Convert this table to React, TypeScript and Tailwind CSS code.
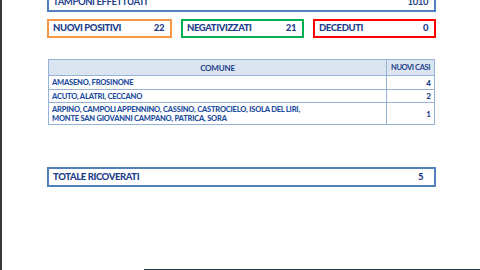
const rows = [
  { comune: ["AMASENO, FROSINONE"], casi: 4, h: "h-[14px]" },
  { comune: ["ACUTO, ALATRI, CECCANO"], casi: 2, h: "h-[13px]" },
  {
    comune: [
      "ARPINO, CAMPOLI APPENNINO, CASSINO, CASTROCIELO, ISOLA DEL LIRI,",
      "MONTE SAN GIOVANNI CAMPANO, PATRICA, SORA",
    ],
    casi: 1,
    h: "h-[22px]",
  },
]

const stats = [
  { label: "NUOVI POSITIVI", value: 22, border: "border-[#f79646]", w: "w-[125px]" },
  { label: "NEGATIVIZZATI", value: 21, border: "border-[#00b050]", w: "w-[123px]" },
  { label: "DECEDUTI", value: 0, border: "border-[#ff0000]", w: "w-[123px]" },
]

export default function App() {
  return (
    <div className="relative flex h-[270px] w-[480px] flex-col overflow-hidden border-l-[2px] border-[#3a3a3a] bg-white font-['Lato',sans-serif] font-bold text-[#1e3f8c]">
      <div className="ml-[45px] flex w-[389px] flex-col">
        <div className="mt-[-8px] flex h-[20px] items-center justify-between border-2 border-[#4f81bd] pl-[4px] pr-[6px] text-[9.5px] tracking-[-0.4px]">
          <span>TAMPONI EFFETTUATI</span>
          <span>1010</span>
        </div>

        <div className="mt-[7px] flex justify-between">
          {stats.map((s) => (
            <div
              key={s.label}
              className={`flex h-[19px] items-center justify-between border-2 ${s.border} ${s.w} pl-[4px] pr-[6px] text-[9.5px] font-black tracking-[-0.4px]`}
            >
              <span>{s.label}</span>
              <span>{s.value}</span>
            </div>
          ))}
        </div>

        <table className="ml-px mt-[21px] w-[387px] border-collapse font-black text-[#1f4f9f]">
          <thead>
            <tr className="h-[16px] bg-[#dbe5f1] text-[#1e3f8c]">
              <th className="border border-[#95b3d7] text-center text-[8px] tracking-[-0.2px]">COMUNE</th>
              <th className="w-[48px] border border-[#95b3d7] text-center text-[7.5px] tracking-[-0.4px]">NUOVI CASI</th>
            </tr>
          </thead>
          <tbody>
            {rows.map((r) => (
              <tr key={r.comune[0]} className={r.h}>
                <td className="border border-[#95b3d7] px-[3px] text-left text-[7.5px] leading-[9px] tracking-[-0.2px]">
                  {r.comune.map((line) => (
                    <div key={line}>{line}</div>
                  ))}
                </td>
                <td className="border border-[#95b3d7] px-[3px] text-right text-[8px] text-[#1e3f8c]">{r.casi}</td>
              </tr>
            ))}
          </tbody>
        </table>

        <div className="mt-[42px] flex h-[20px] items-center justify-between border-2 border-[#4f81bd] pl-[4px] pr-[11px] text-[9.5px] font-black tracking-[-0.4px]">
          <span>TOTALE RICOVERATI</span>
          <span>5</span>
        </div>
      </div>

      <div className="absolute bottom-0 left-[142px] right-0 h-px bg-[#1f3a4a]" />
    </div>
  )
}
